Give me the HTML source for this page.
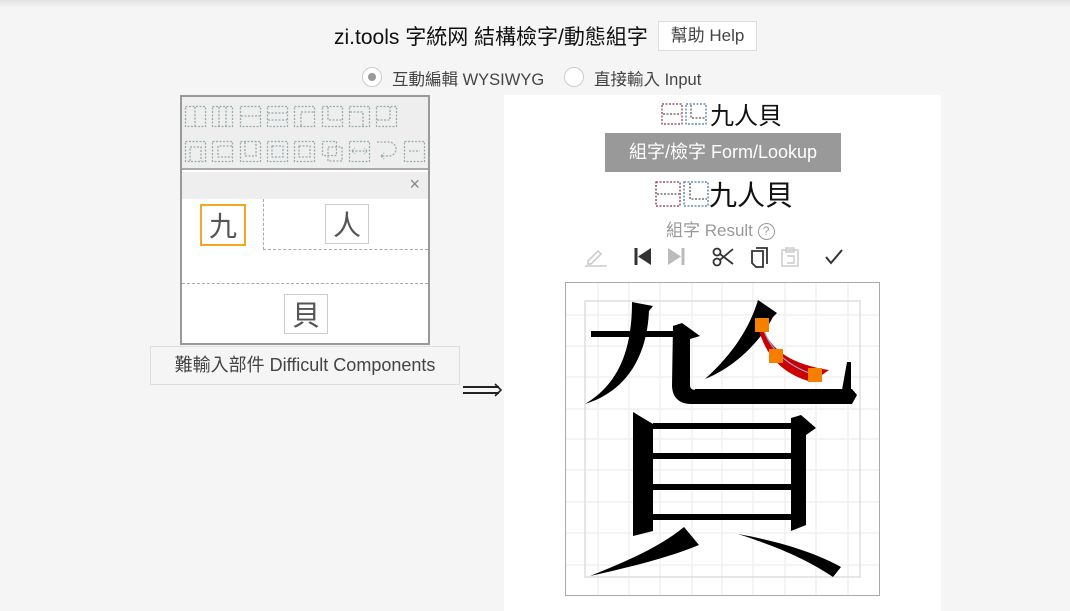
<!DOCTYPE html>
<html><head><meta charset="utf-8">
<style>
*{margin:0;padding:0;box-sizing:border-box}
body{width:1070px;height:611px;overflow:hidden;background:#f5f5f5;font-family:"Liberation Sans","Noto Sans CJK TC",sans-serif;position:relative;color:#222}
.abs{position:absolute}
.top{left:0;top:0;width:1070px;height:8px;background:linear-gradient(#e2e2e2,#f5f5f5)}
.title{left:334px;top:21px;font-size:21px;color:#111;white-space:nowrap}
.help{left:658px;top:21px;width:99px;height:30px;border:1px solid #ddd;background:#fff;font-size:17px;color:#444;text-align:center;line-height:28px}
.radio{width:20px;height:20px;border-radius:50%;border:1px solid #ccc;background:#fff}
.rtxt{font-size:16.5px;color:#444;white-space:nowrap}
.lp{left:180px;top:95px;width:250px;height:250px;border:2px solid #999;background:#fff}
.tb{left:0;top:0;width:246px;height:73px;background:#eee;border-bottom:2px solid #aaa}
.bar{left:0;top:75px;width:246px;height:27px;background:#eee}
.cbox{border:1px solid #ccc;background:#fff;font-size:28px;color:#555;text-align:center;font-family:"Noto Sans CJK TC",sans-serif}
.dc{left:150px;top:346px;width:310px;height:39px;border:1px solid #ddd;background:#f5f5f5;font-size:18px;color:#444;text-align:center;line-height:37px;white-space:nowrap}
.rp{left:504px;top:95px;width:437px;height:516px;background:#fff}
.btn{left:605px;top:133px;width:236px;height:39px;background:#999;color:#fff;font-size:18px;text-align:center;line-height:39px}
</style></head><body>
<div class="abs top"></div>
<div class="abs title">zi.tools 字統网 結構檢字/動態組字</div>
<div class="abs help">幫助 Help</div>
<div class="abs radio" style="left:362px;top:67px"><div style="position:absolute;left:5px;top:5px;width:8px;height:8px;border-radius:50%;background:#999"></div></div>
<div class="abs rtxt" style="left:392px;top:66px">互動編輯 WYSIWYG</div>
<div class="abs radio" style="left:564px;top:67px"></div>
<div class="abs rtxt" style="left:594px;top:66px">直接輸入 Input</div>

<div class="abs lp">
 <div class="abs tb">
  <svg width="246" height="73" style="position:absolute;left:0;top:0" fill="none" stroke="#9aa" stroke-width="1.3" stroke-dasharray="2 1.5">
   <g transform="translate(3,9)"><rect x="0.5" y="0.5" width="20" height="20"/><path d="M10 1v19"/></g>
   <g transform="translate(30,9)"><rect x="0.5" y="0.5" width="20" height="20"/><path d="M7 1v19M14 1v19"/></g>
   <g transform="translate(58,9)"><rect x="0.5" y="0.5" width="20" height="20"/><path d="M1 10h19"/></g>
   <g transform="translate(85,9)"><rect x="0.5" y="0.5" width="20" height="20"/><path d="M1 7h19M1 14h19"/></g>
   <g transform="translate(112,9)"><rect x="0.5" y="0.5" width="20" height="20"/><path d="M7 20V6h13"/></g>
   <g transform="translate(140,9)"><rect x="0.5" y="0.5" width="20" height="20"/><path d="M6 1v13h14"/></g>
   <g transform="translate(167,9)"><rect x="0.5" y="0.5" width="20" height="20"/><path d="M1 6h13v14"/></g>
   <g transform="translate(194,9)"><rect x="0.5" y="0.5" width="20" height="20"/><path d="M1 14h13V1"/></g>
   <g transform="translate(3,44)"><rect x="0.5" y="0.5" width="20" height="20"/><path d="M5 20V6h11v14"/></g>
   <g transform="translate(30,44)"><rect x="0.5" y="0.5" width="20" height="20"/><path d="M20 5H6v11h14"/></g>
   <g transform="translate(58,44)"><rect x="0.5" y="0.5" width="20" height="20"/><path d="M5 1v14h11V1"/></g>
   <g transform="translate(85,44)"><rect x="0.5" y="0.5" width="20" height="20"/><rect x="5" y="5" width="11" height="11"/></g>
   <g transform="translate(112,44)"><rect x="0.5" y="0.5" width="20" height="20"/><rect x="5" y="5" width="11" height="11"/></g>
   <g transform="translate(140,44)"><rect x="0.5" y="0.5" width="14" height="14"/><rect x="6" y="6" width="14" height="14"/></g>
   <g transform="translate(167,44)"><rect x="0.5" y="0.5" width="20" height="20"/><path d="M3 10h15M3 10l3-3M3 10l3 3M18 10l-3-3M18 10l-3 3"/></g>
   <g transform="translate(194,44)"><path d="M1 1h12a7 7 0 0 1 0 14H5"/><path d="M5 15l3-3M5 15l3 3"/></g>
   <g transform="translate(222,44)"><rect x="0.5" y="0.5" width="20" height="20"/><path d="M5 10h11"/></g>
  </svg>
 </div>
 <div class="abs bar"><span style="position:absolute;right:8px;top:2px;font-size:18px;color:#888">×</span></div>
 <div class="abs" style="left:81px;top:102px;width:0;height:51px;border-left:1px dashed #aaa"></div>
 <div class="abs" style="left:81px;top:152px;width:165px;border-top:1px dashed #aaa"></div>
 <div class="abs" style="left:0;top:186px;width:246px;border-top:1px dashed #aaa"></div>
 <div class="abs cbox" style="left:18px;top:107px;width:46px;height:42px;border:2px solid #f5a623;line-height:38px">九</div>
 <div class="abs cbox" style="left:143px;top:107px;width:44px;height:40px;line-height:38px">人</div>
 <div class="abs cbox" style="left:102px;top:197px;width:44px;height:40px;line-height:38px">貝</div>
</div>
<div class="abs dc">難輸入部件 Difficult Components</div>
<svg class="abs" style="left:463px;top:383px" width="40" height="14"><path d="M0 4h36M0 10h36" stroke="#222" stroke-width="2"/><path d="M32 1l6 6-6 6" stroke="#222" stroke-width="1.6" fill="none"/></svg>

<div class="abs rp"></div>
<svg class="abs" style="left:661px;top:103px" width="50" height="22" fill="none" stroke-dasharray="2 1.5" stroke-width="1.2"><rect x="1" y="1" width="20" height="20" stroke="#835"/><path d="M2 11h18" stroke="#555"/><rect x="25" y="1" width="20" height="20" stroke="#47a"/><path d="M30 2v13h14" stroke="#555"/></svg>
<div class="abs" style="left:710px;top:98px;font-size:24px;color:#111;font-family:'Noto Sans CJK TC',sans-serif;line-height:32px">九人貝</div>
<div class="abs btn">組字/檢字 Form/Lookup</div>
<svg class="abs" style="left:655px;top:181px" width="56" height="26" fill="none" stroke-dasharray="2 1.5" stroke-width="1.3"><rect x="1" y="1" width="24" height="24" stroke="#835"/><path d="M2 13h22" stroke="#555"/><rect x="29" y="1" width="24" height="24" stroke="#47a"/><path d="M35 2v16h17" stroke="#555"/></svg>
<div class="abs" style="left:709px;top:175px;font-size:28px;color:#111;font-family:'Noto Sans CJK TC',sans-serif;line-height:38px">九人貝</div>
<div class="abs" style="left:666px;top:216px;font-size:17px;color:#999;white-space:nowrap">組字 Result <span style="display:inline-block;width:17px;height:17px;border:1.5px solid #999;border-radius:50%;font-size:12px;text-align:center;line-height:14px;vertical-align:1px">?</span></div>

<svg class="abs" style="left:580px;top:244px" width="275" height="26">
 <g stroke="#ccc" stroke-width="1.6" fill="none"><path d="M8 17l10-10 3 3-10 10H8z"/><path d="M5 22h22"/></g>
 <path d="M56 4v17" stroke="#333" stroke-width="3"/><path d="M71 4v17L58 12.5z" fill="#333"/>
 <path d="M88 4v17L101 12.5z" fill="#bbb"/><path d="M103 4v17" stroke="#bbb" stroke-width="3"/>
 <g stroke="#333" stroke-width="1.8" fill="none"><circle cx="137" cy="8" r="3.5"/><circle cx="137" cy="18" r="3.5"/><path d="M140 10l13 10M140 16l13-11"/></g>
 <g stroke="#333" stroke-width="1.8" fill="none"><path d="M172 7h11v16h-7l-4-4z"/><path d="M176 4h11v16"/></g>
 <g stroke="#ccc" stroke-width="1.5" fill="none"><path d="M202 6h16v16h-16z"/><path d="M206 4h8v4h-8zM207 12h7v7h-7"/></g>
 <path d="M246 13l5 6 11-13" stroke="#333" stroke-width="2" fill="none"/>
</svg>

<svg class="abs" style="left:565px;top:282px" width="315" height="314">
 <rect x="0.5" y="0.5" width="314" height="313" fill="#fff" stroke="#aaa"/>
 <g stroke="#f0f0f0" stroke-width="1.5">
  <path d="M33 1v312M64 1v312M95 1v312M127 1v312M157 1v312M188 1v312M220 1v312M251 1v312M283 1v312"/>
  <path d="M1 33h313M1 64h313M1 95h313M1 127h313M1 157h313M1 188h313M1 220h313M1 251h313M1 283h313"/>
 </g>
 <rect x="20" y="19" width="275" height="276" fill="none" stroke="#ddd" stroke-width="1.5"/>
 <g fill="#000">
  <path d="M26 49h84v6H26z"/>
  <path d="M67 20l21 4-4 5c-2 45-22 80-64 93 30-18 47-48 47-102z"/>
  <path d="M108 44l9-3 18 13-10 3v46c0 4 2 5 8 5v14h-7c-12 0-19-7-19-19z"/>
  <path d="M130 107h157l5 6-5 9H130z"/>
  <path d="M277 108l5-28 4 0 0 28z"/>
  <path d="M193 18l19 13-4 4C195 60 170 85 140 97 168 72 185 45 193 18z"/>
  <path d="M68 130l20 12v107l-20 5z"/>
  <path d="M88 141h139v6H88zM88 171h139v6H88zM88 202h139v6H88zM88 232h139v6H88z"/>
  <path d="M226 136l10-3 15 13-10 7v90l-15 6z"/>
  <path d="M119 245l15 18C100 277 60 286 25 294 60 280 95 265 119 245z"/>
  <path d="M173 252c45 8 80 20 103 33l-8 10c-25-17-55-30-95-43z"/>
 </g>
 <path d="M197 43C205 70 230 83 264 88L247 100C216 92 200 72 193 45Z" fill="#c00"/>
 <path d="M197 43C205 70 225 85 250 93" stroke="#8ad" stroke-width="1.2" fill="none"/>
 <g fill="#f77f00"><rect x="190" y="36" width="14" height="14"/><rect x="204" y="67" width="14" height="14"/><rect x="243" y="86" width="14" height="14"/></g>
</svg>
</body></html>
